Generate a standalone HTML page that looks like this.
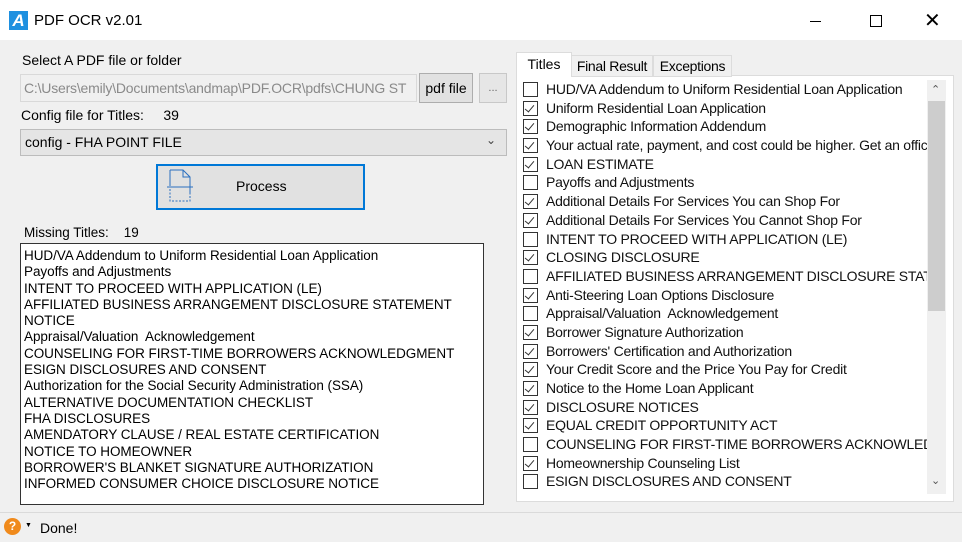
<html><head><style>
body{margin:0;width:968px;height:542px;background:#f0f0f0;font-family:"Liberation Sans",sans-serif;font-size:14px;color:#000;position:relative;overflow:hidden}
.a{position:absolute}
.tb{left:0;top:0;width:968px;height:40px;background:#fff}
.lst div{height:16.3px;line-height:16.3px;font-size:13.5px;letter-spacing:-0.05px;white-space:nowrap}
.chk div{height:18.7px;line-height:18.7px;white-space:nowrap;position:relative;padding-left:27px;font-size:14px;letter-spacing:-0.25px;color:#111}
.chk div:before{content:"";position:absolute;left:4px;top:2px;width:13px;height:13px;border:1px solid #333;background:#fff}
.chk div.c:after{content:"";position:absolute;left:8px;top:4px;width:4px;height:8px;border:solid #333;border-width:0 1.5px 1.5px 0;transform:rotate(40deg)}
</style></head><body>
<div class="a tb"></div>
<div class="a" style="left:9px;top:11px;width:19px;height:19px;background:#1e90e0;color:#fff;font-weight:bold;font-style:italic;font-size:17px;line-height:19px;text-align:center">A</div>
<div class="a" style="left:34px;top:12px;font-size:15px">PDF OCR v2.01</div>
<div class="a" style="left:810px;top:21px;width:11px;height:1px;background:#000"></div>
<div class="a" style="left:870px;top:15px;width:10px;height:10px;border:1px solid #000"></div>
<div class="a" style="left:924px;top:8px;font-size:20px;font-weight:300">✕</div>

<div class="a" style="left:22px;top:52px">Select A PDF file or folder</div>
<div class="a" style="left:20px;top:74px;width:392px;height:26px;border:1px solid #d9d9d9;background:#f0f0f0;color:#8a8a8a;line-height:26px;padding-left:3px;white-space:nowrap;overflow:hidden;letter-spacing:-0.2px">C:\Users\emily\Documents\andmap\PDF.OCR\pdfs\CHUNG ST</div>
<div class="a" style="left:419px;top:73px;width:52px;height:28px;border:1px solid #adadad;background:#e1e1e1;line-height:28px;text-align:center">pdf file</div>
<div class="a" style="left:479px;top:73px;width:26px;height:28px;border:1px solid #c8c8c8;background:#e6e6e6;line-height:28px;text-align:center;color:#666;font-size:11px">...</div>
<div class="a" style="left:21px;top:107px">Config file for Titles:&nbsp;&nbsp;&nbsp;&nbsp;&nbsp;39</div>
<div class="a" style="left:20px;top:129px;width:481px;height:25px;border:1px solid #bcbcbc;background:#e5e5e5;line-height:25px;padding-left:4px">config - FHA POINT FILE</div>
<div class="a" style="left:486px;top:133px;font-size:12px;color:#444">&#8964;</div>
<div class="a" style="left:156px;top:164px;width:205px;height:42px;border:2px solid #0078d7;background:#e1e1e1"></div>
<svg class="a" style="left:165px;top:168px" width="30" height="36"><path d="M5 2h13l7 7v16M5 2v16" fill="none" stroke="#2a6fc0" stroke-width="1"/><path d="M18 2v7h7" fill="none" stroke="#2a6fc0"/><path d="M2 19h26" stroke="#2a6fc0"/><path d="M5 21v12h20v-12" fill="none" stroke="#2a6fc0" stroke-dasharray="2,1.5"/></svg>
<div class="a" style="left:236px;top:178px">Process</div>
<div class="a" style="left:24px;top:225px;font-size:13.5px">Missing Titles:&nbsp;&nbsp;&nbsp;&nbsp;19</div>
<div class="a lst" style="left:20px;top:243px;border:1px solid #333;background:#fff;padding:4px 0 0 3px;box-sizing:border-box;width:464px;height:262px">
<div>HUD/VA Addendum to Uniform Residential Loan Application</div><div>Payoffs and Adjustments</div><div>INTENT TO PROCEED WITH APPLICATION (LE)</div><div>AFFILIATED BUSINESS ARRANGEMENT DISCLOSURE STATEMENT</div><div>NOTICE</div><div>Appraisal/Valuation&nbsp; Acknowledgement</div><div>COUNSELING FOR FIRST-TIME BORROWERS ACKNOWLEDGMENT</div><div>ESIGN DISCLOSURES AND CONSENT</div><div>Authorization for the Social Security Administration (SSA)</div><div>ALTERNATIVE DOCUMENTATION CHECKLIST</div><div>FHA DISCLOSURES</div><div>AMENDATORY CLAUSE / REAL ESTATE CERTIFICATION</div><div>NOTICE TO HOMEOWNER</div><div>BORROWER'S BLANKET SIGNATURE AUTHORIZATION</div><div>INFORMED CONSUMER CHOICE DISCLOSURE NOTICE</div></div>

<div class="a" style="left:516px;top:75px;width:436px;height:425px;background:#fff;border:1px solid #dcdcdc"></div>
<div class="a" style="left:516px;top:52px;width:54px;height:24px;background:#fff;border:1px solid #dcdcdc;border-bottom:none;line-height:22px;text-align:center">Titles</div>
<div class="a" style="left:571px;top:55px;width:80px;height:20px;background:#f0f0f0;border:1px solid #dcdcdc;line-height:21px;text-align:center;letter-spacing:-0.3px">Final Result</div>
<div class="a" style="left:653px;top:55px;width:77px;height:20px;background:#f0f0f0;border:1px solid #dcdcdc;line-height:21px;text-align:center;letter-spacing:-0.3px">Exceptions</div>
<div class="a chk" style="left:519px;top:80px;width:408px;overflow:hidden">
<div>HUD/VA Addendum to Uniform Residential Loan Application</div><div class="c">Uniform Residential Loan Application</div><div class="c">Demographic Information Addendum</div><div class="c">Your actual rate, payment, and cost could be higher. Get an offic</div><div class="c">LOAN ESTIMATE</div><div>Payoffs and Adjustments</div><div class="c">Additional Details For Services You can Shop For</div><div class="c">Additional Details For Services You Cannot Shop For</div><div>INTENT TO PROCEED WITH APPLICATION (LE)</div><div class="c">CLOSING DISCLOSURE</div><div>AFFILIATED BUSINESS ARRANGEMENT DISCLOSURE STATEMENT</div><div class="c">Anti-Steering Loan Options Disclosure</div><div>Appraisal/Valuation&nbsp; Acknowledgement</div><div class="c">Borrower Signature Authorization</div><div class="c">Borrowers' Certification and Authorization</div><div class="c">Your Credit Score and the Price You Pay for Credit</div><div class="c">Notice to the Home Loan Applicant</div><div class="c">DISCLOSURE NOTICES</div><div class="c">EQUAL CREDIT OPPORTUNITY ACT</div><div>COUNSELING FOR FIRST-TIME BORROWERS ACKNOWLEDGMENT</div><div class="c">Homeownership Counseling List</div><div>ESIGN DISCLOSURES AND CONSENT</div></div>
<div class="a" style="left:927px;top:80px;width:19px;height:414px;background:#f0f0f0"></div>
<div class="a" style="left:928px;top:101px;width:17px;height:210px;background:#cdcdcd"></div>
<div class="a" style="left:931px;top:83px;font-size:11px;color:#555">&#8963;</div>
<div class="a" style="left:931px;top:474px;font-size:11px;color:#555">&#8964;</div>
<div class="a" style="left:962px;top:0;width:6px;height:542px;background:#fff"></div>
<div class="a" style="left:0;top:512px;width:962px;height:1px;background:#dadada"></div>
<div class="a" style="left:4px;top:518px;width:17px;height:17px;border-radius:50%;background:#f08a1c;color:#fff;font-size:12px;font-weight:bold;text-align:center;line-height:17px">?</div>
<div class="a" style="left:25px;top:522px;font-size:7px">▼</div>
<div class="a" style="left:40px;top:520px">Done!</div>
</body></html>
